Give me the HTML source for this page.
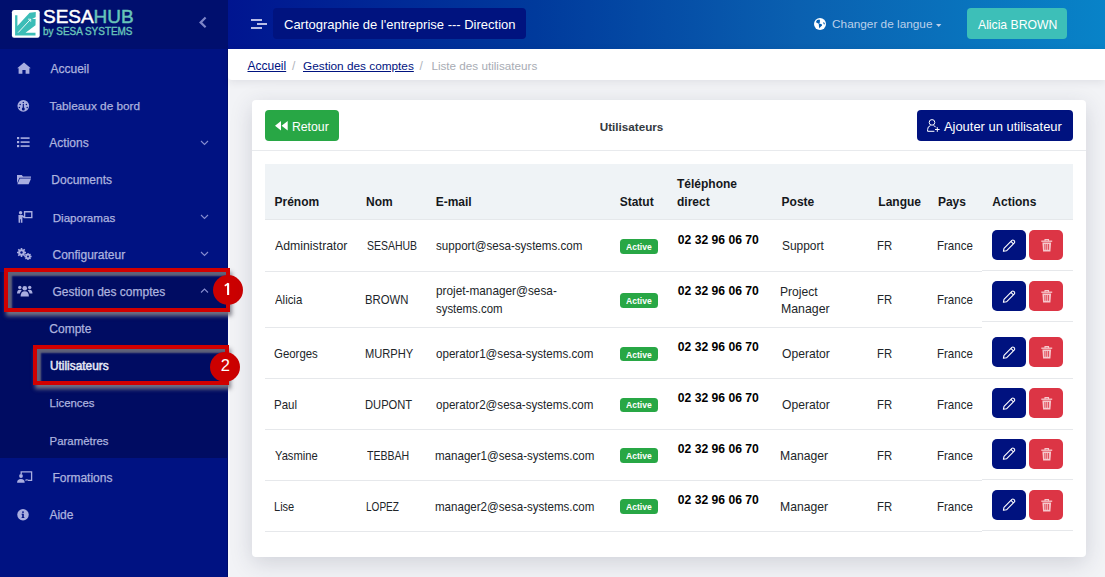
<!DOCTYPE html>
<html><head><meta charset="utf-8"><style>
html,body{margin:0;padding:0;width:1105px;height:577px;overflow:hidden;background:#eef0f4;}
body{position:relative;font-family:"Liberation Sans",sans-serif;}
.t{position:absolute;white-space:nowrap;font-family:"Liberation Sans",sans-serif;}
.r{position:absolute;box-sizing:content-box;}
svg.r{overflow:visible}
</style></head><body>
<div class="r" style="left:228px;top:48px;width:877px;height:529px;background:#f2f3f6;"></div>
<div class="r" style="left:228px;top:48px;width:1.5px;height:529px;background:#f8f9fb;"></div>
<div class="r" style="left:0px;top:0px;width:228px;height:577px;background:#001282;"></div>
<div class="r" style="left:0px;top:0px;width:228px;height:49px;background:#000f6e;"></div>
<div class="r" style="left:0px;top:272px;width:228px;height:186px;background:#000c62;"></div>
<div class="r" style="left:227px;top:49px;width:1px;height:528px;background:#000d6a;"></div>
<svg class="r" style="left:11px;top:10px" width="29" height="28" viewBox="0 0 28 28">
<rect x="0.4" y="0.1" width="27.8" height="27.7" rx="2.2" fill="#fff"/>
<path d="M3.6 5.3 L5.9 5.3 L5.9 15.9 L18.1 2.8 L24.3 1.9 L24.0 15.3 L14.0 22.8 L24.0 22.8 L24.0 25.6 L3.6 25.6 Z" fill="#3cbdb7"/>
<path d="M6.6 22.6 L19 9.4" stroke="#fff" stroke-width="0.9"/>
<path d="M16.5 9.2 L19.2 9.2 L19.2 11.8" stroke="#fff" stroke-width="0.8" fill="none"/>
<path d="M20.6 9 L24.4 6.9 L24.4 9 Z" fill="#fff"/>
</svg>
<div class="t" id="ts0" style="left:43.243px;top:5.62px;font-size:19px;line-height:22.8px;font-weight:400;color:#fff;transform:scaleX(0.99793);transform-origin:0 0;-webkit-text-stroke:0.5px #fff">SESA<span style="color:#68c4b9;-webkit-text-stroke:0.5px #68c4b9">HUB</span></div>
<div class="t" id="ts1" style="left:43.102px;top:25.93px;font-size:10px;line-height:12.0px;font-weight:400;color:#68c4b9;transform:scaleX(0.99391);transform-origin:0 0;-webkit-text-stroke:0.35px #68c4b9">by SESA SYSTEMS</div>
<svg class="r" style="left:197px;top:15px" width="12" height="15" viewBox="0 0 12 15"><path d="M8.6 2.5 L3.6 7.4 L8.6 12.3" stroke="#7d85c8" stroke-width="2.2" fill="none"/></svg>
<div class="t" style="left:50.5px;top:61.54px;font-size:12px;line-height:14.4px;font-weight:400;color:#adb3df;-webkit-text-stroke:0.25px #adb3df">Accueil</div>
<div class="t" style="left:49.6px;top:98.93px;font-size:11.8px;line-height:14.16px;font-weight:400;color:#adb3df;-webkit-text-stroke:0.25px #adb3df">Tableaux de bord</div>
<div class="t" style="left:49.3px;top:135.64px;font-size:12px;line-height:14.4px;font-weight:400;color:#adb3df;-webkit-text-stroke:0.25px #adb3df">Actions</div>
<div class="t" style="left:51.3px;top:172.84px;font-size:12px;line-height:14.4px;font-weight:400;color:#adb3df;-webkit-text-stroke:0.25px #adb3df">Documents</div>
<div class="t" style="left:52.7px;top:211.22px;font-size:11.6px;line-height:13.92px;font-weight:400;color:#adb3df;-webkit-text-stroke:0.25px #adb3df">Diaporamas</div>
<div class="t" style="left:52.5px;top:248.24px;font-size:12px;line-height:14.4px;font-weight:400;color:#adb3df;-webkit-text-stroke:0.25px #adb3df">Configurateur</div>
<div class="t" style="left:52.5px;top:284.64px;font-size:12px;line-height:14.4px;font-weight:400;color:#adb3df;-webkit-text-stroke:0.25px #adb3df">Gestion des comptes</div>
<div class="t" style="left:52.4px;top:470.94px;font-size:12px;line-height:14.4px;font-weight:400;color:#adb3df;-webkit-text-stroke:0.25px #adb3df">Formations</div>
<div class="t" style="left:49.4px;top:507.84px;font-size:12px;line-height:14.4px;font-weight:400;color:#adb3df;-webkit-text-stroke:0.25px #adb3df">Aide</div>
<div class="t" style="left:49.3px;top:321.74px;font-size:12px;line-height:14.4px;font-weight:400;color:#adb3df;-webkit-text-stroke:0.25px #adb3df">Compte</div>
<div class="t" style="left:49.6px;top:396.61px;font-size:11.4px;line-height:13.68px;font-weight:400;color:#adb3df;-webkit-text-stroke:0.25px #adb3df">Licences</div>
<div class="t" style="left:49.6px;top:434.61px;font-size:11.4px;line-height:13.68px;font-weight:400;color:#adb3df;-webkit-text-stroke:0.25px #adb3df">Paramètres</div>
<div class="t" id="ts2" style="left:49.755px;top:358.84px;font-size:12px;line-height:14.4px;font-weight:400;color:#e6e8f6;transform:scaleX(0.98762);transform-origin:0 0;-webkit-text-stroke:0.5px #e6e8f6">Utilisateurs</div>
<svg class="r" style="left:199.8px;top:140.4px" width="9" height="6" viewBox="0 0 9 6"><path d="M1 1 L4.5 4.5 L8 1" stroke="#858cd0" stroke-width="1.1" fill="none"/></svg>
<svg class="r" style="left:199.8px;top:213.9px" width="9" height="6" viewBox="0 0 9 6"><path d="M1 1 L4.5 4.5 L8 1" stroke="#858cd0" stroke-width="1.1" fill="none"/></svg>
<svg class="r" style="left:199.8px;top:250.9px" width="9" height="6" viewBox="0 0 9 6"><path d="M1 1 L4.5 4.5 L8 1" stroke="#858cd0" stroke-width="1.1" fill="none"/></svg>
<svg class="r" style="left:199.6px;top:287.8px" width="9" height="6" viewBox="0 0 9 6"><path d="M1 4.5 L4.5 1 L8 4.5" stroke="#858cd0" stroke-width="1.1" fill="none"/></svg>
<svg class="r" style="left:16.9px;top:62.4px" width="14" height="12" viewBox="0 0 14 12"><path d="M7 0.5 L13.8 6.3 L12.4 6.3 L12.4 11.7 L8.6 11.7 L8.6 8 L5.4 8 L5.4 11.7 L1.6 11.7 L1.6 6.3 L0.2 6.3 Z" fill="#a9aee0"/></svg>
<svg class="r" style="left:16.8px;top:99.7px" width="12.6" height="11.7" viewBox="0 0 12.6 11.7"><circle cx="6.3" cy="5.85" r="5.85" fill="#a9aee0"/><circle cx="3.2" cy="4.6" r="0.75" fill="#001282"/><circle cx="6.3" cy="2.4" r="0.75" fill="#001282"/><circle cx="9.4" cy="4.6" r="0.75" fill="#001282"/><circle cx="2.4" cy="7.6" r="0.75" fill="#001282"/><circle cx="10.2" cy="7.6" r="0.75" fill="#001282"/><path d="M6.3 4 L6.3 8" stroke="#001282" stroke-width="1.1"/><circle cx="6.3" cy="8.9" r="1.5" fill="#001282"/></svg>
<svg class="r" style="left:16.8px;top:137.3px" width="12.6" height="10.2" viewBox="0 0 12.6 10.2"><rect x="0" y="0" width="2.2" height="2.2" fill="#a9aee0"/><rect x="0" y="4" width="2.2" height="2.2" fill="#a9aee0"/><rect x="0" y="8" width="2.2" height="2.2" fill="#a9aee0"/><rect x="3.6" y="0.3" width="9" height="1.6" fill="#a9aee0"/><rect x="3.6" y="4.3" width="9" height="1.6" fill="#a9aee0"/><rect x="3.6" y="8.3" width="9" height="1.6" fill="#a9aee0"/></svg>
<svg class="r" style="left:16.8px;top:173.7px" width="14.1" height="10.2" viewBox="0 0 14.1 10.2"><path d="M0 1 L0 9.5 L2.4 3.8 L14 3.8 L14 2.6 L6 2.6 L4.8 1 Z" fill="#a9aee0"/><path d="M2.8 4.6 L14.1 4.6 L11.6 10.2 L0.4 10.2 Z" fill="#a9aee0"/></svg>
<svg class="r" style="left:17.8px;top:211.3px" width="14.5" height="11.7" viewBox="0 0 14.5 11.7"><circle cx="2.6" cy="1.7" r="1.7" fill="#a9aee0"/><path d="M0.4 4 L4.4 4 L6.6 5.8 L5.8 6.9 L4.4 6 L4.4 11.7 L2.9 11.7 L2.9 8.2 L2.1 8.2 L2.1 11.7 L0.6 11.7 Z" fill="#a9aee0"/><path d="M6.6 0.7 L13.8 0.7 L13.8 6.6 L6.6 6.6 Z" stroke="#a9aee0" stroke-width="1.4" fill="none"/></svg>
<svg class="r" style="left:16.8px;top:248.2px" width="15" height="12.1" viewBox="0 0 15 12.1"><circle cx="4.5" cy="4.5" r="3.3" fill="#a9aee0"/><circle cx="4.5" cy="4.5" r="1.2" fill="#001282"/><path d="M4.5 0 L4.5 9 M0 4.5 L9 4.5 M1.3 1.3 L7.7 7.7 M7.7 1.3 L1.3 7.7" stroke="#a9aee0" stroke-width="1.6"/><circle cx="4.5" cy="4.5" r="1.2" fill="#001282"/><circle cx="11" cy="8.5" r="2.7" fill="#a9aee0"/><path d="M11 4.9 L11 12.1 M7.4 8.5 L14.6 8.5 M8.5 6 L13.5 11 M13.5 6 L8.5 11" stroke="#a9aee0" stroke-width="1.4"/><circle cx="11" cy="8.5" r="1" fill="#001282"/></svg>
<svg class="r" style="left:16.8px;top:285.3px" width="15.5" height="11.4" viewBox="0 0 15.5 11.4"><circle cx="7.75" cy="3.2" r="2.3" fill="#a9aee0"/><circle cx="2.8" cy="2.4" r="1.7" fill="#a9aee0"/><circle cx="12.7" cy="2.4" r="1.7" fill="#a9aee0"/><path d="M3.6 11.4 Q3.6 6.2 7.75 6.2 Q11.9 6.2 11.9 11.4 Z" fill="#a9aee0"/><path d="M0 8.6 Q0 4.8 2.8 4.8 Q4.2 4.8 4.8 5.6 Q3 7 2.9 8.6 Z" fill="#a9aee0"/><path d="M15.5 8.6 Q15.5 4.8 12.7 4.8 Q11.3 4.8 10.7 5.6 Q12.5 7 12.6 8.6 Z" fill="#a9aee0"/></svg>
<svg class="r" style="left:16.9px;top:471.0px" width="15.3" height="12" viewBox="0 0 15.3 12"><path d="M4.2 3 L4.2 0.8 L14.6 0.8 L14.6 9.4 L11 9.4" stroke="#a9aee0" stroke-width="1.3" fill="none"/><circle cx="4" cy="5" r="1.9" fill="#a9aee0"/><path d="M0.1 11.7 Q0.1 8 3.9 8 Q7.7 8 7.7 11.7 Z" fill="#a9aee0"/><path d="M7.8 9.6 Q8.6 7.8 10.2 8.2 Q11.4 8.6 11.6 9.6 Z" fill="#a9aee0"/></svg>
<svg class="r" style="left:16.9px;top:508.6px" width="12" height="11.5" viewBox="0 0 12 11.5"><circle cx="6" cy="5.75" r="5.75" fill="#a9aee0"/><rect x="5.2" y="4.8" width="1.6" height="4" fill="#001282"/><circle cx="6" cy="3.1" r="0.95" fill="#001282"/><rect x="4.6" y="8" width="2.8" height="0.9" fill="#001282"/><rect x="4.6" y="4.8" width="1.5" height="0.9" fill="#001282"/></svg>
<div class="r" style="left:4px;top:268px;width:218px;height:36px;border:4px solid #d10000;box-shadow:inset 4px 4px 2px #5f6279, 2px 4px 4px rgba(125,125,135,0.9);"></div>
<div class="r" style="left:33px;top:345.2px;width:188px;height:31.6px;border:4px solid #d10000;box-shadow:inset 4px 4px 2px #5f6279, 2px 4px 4px rgba(125,125,135,0.9);"></div>
<div class="r" style="left:213px;top:274.5px;width:30px;height:30px;border-radius:50%;background:#cc0000;color:#fff;font-size:16.5px;line-height:27.8px;text-align:center;font-family:'Liberation Sans'"></div>
<svg class="r" style="left:224px;top:283px" width="6" height="12.2" viewBox="0 0 6 12.2"><path d="M4.1 0.2 L4.1 12" stroke="#fff" stroke-width="2.1" fill="none"/><path d="M0.7 2.8 Q3 1.9 4.1 0.3" stroke="#fff" stroke-width="1.6" fill="none"/></svg>
<div class="r" style="left:210.25px;top:351.5px;width:30px;height:30px;border-radius:50%;background:#cc0000;color:#fff;font-size:16.5px;line-height:27.8px;text-align:center;font-family:'Liberation Sans'">2</div>
<div class="r" style="left:228px;top:0px;width:877px;height:49px;background:linear-gradient(90deg,#001590 0%,#003a9c 35%,#0a60b0 65%,#0883c8 100%);"></div>
<div class="r" style="left:251px;top:19px;width:11px;height:2px;background:#b9bde6;"></div>
<div class="r" style="left:257.3px;top:22.8px;width:9.6px;height:2px;background:#b9bde6;"></div>
<div class="r" style="left:251px;top:26.9px;width:11px;height:2px;background:#b9bde6;"></div>
<div class="r" style="left:273.4px;top:8.1px;width:252.5px;height:30.5px;background:#00137f;border-radius:4px"></div>
<div class="t" style="left:284px;top:17.00px;font-size:13px;line-height:15.6px;font-weight:400;color:#ffffff;">Cartographie de l'entreprise --- Direction</div>
<svg class="r" style="left:813.9px;top:18px" width="12" height="12" viewBox="0 0 12 12"><circle cx="6" cy="6" r="6" fill="#fff"/>
<path d="M1.84 4.33 L3.05 2.08 L5.48 1.56 L6.17 2.95 L5.48 4.33 L6.5 5.2 L4.44 5.72 L3.05 4.68 Z" fill="#0560b4"/>
<path d="M4.78 6.07 L7.56 6.07 L8.08 7.45 L6.17 9.19 L5.48 10.57 L4.96 8.49 Z" fill="#0560b4"/>
<path d="M9.29 3.99 L10.68 5.03 L10.68 6.41 L9.8 6.24 L9.29 5.03 Z" fill="#0560b4"/></svg>
<div class="t" style="left:832.1px;top:17.43px;font-size:11.8px;line-height:14.16px;font-weight:400;color:#bcd0ea;">Changer de langue</div>
<svg class="r" style="left:935.5px;top:23.5px" width="5.4" height="3" viewBox="0 0 5.4 3"><path d="M0 0 L5.4 0 L2.7 3 Z" fill="#bcd0ea"/></svg>
<div class="r" style="left:967px;top:8px;width:100px;height:31px;background:#3dbfb8;border-radius:4px"></div>
<div class="t" style="left:978px;top:17.75px;font-size:12.2px;line-height:14.64px;font-weight:400;color:#ffffff;">Alicia BROWN</div>
<div class="r" style="left:228px;top:49px;width:877px;height:31px;background:#ffffff;border-radius:0 0 0 4px;box-shadow:0 2px 8px rgba(30,35,60,0.09)"></div>
<div class="t" style="left:247.5px;top:58.64px;font-size:12px;line-height:14.4px;font-weight:400;color:#00137f;text-decoration:underline">Accueil</div>
<div class="t" style="left:292px;top:58.64px;font-size:12px;line-height:14.4px;font-weight:400;color:#b0b4bc;">/</div>
<div class="t" style="left:303px;top:58.83px;font-size:11.8px;line-height:14.16px;font-weight:400;color:#00137f;text-decoration:underline">Gestion des comptes</div>
<div class="t" style="left:419.5px;top:58.64px;font-size:12px;line-height:14.4px;font-weight:400;color:#b0b4bc;">/</div>
<div class="t" style="left:431.4px;top:58.93px;font-size:11.7px;line-height:14.04px;font-weight:400;color:#a8acb4;">Liste des utilisateurs</div>
<div class="r" style="left:252px;top:100px;width:834px;height:457px;background:#ffffff;border-radius:4px;box-shadow:0 6px 22px rgba(40,45,75,0.17)"></div>
<div class="r" style="left:252px;top:150.3px;width:834px;height:1px;background:#e8eaed;"></div>
<div class="r" style="left:265px;top:110px;width:74px;height:30.8px;background:#28a745;border-radius:4px"></div>
<svg class="r" style="left:275px;top:120.8px" width="13" height="9.4" viewBox="0 0 13 9.4"><path d="M0 4.7 L6 0 L6 9.4 Z M6.6 4.7 L12.7 0 L12.7 9.4 Z" fill="#fff"/></svg>
<div class="t" style="left:291.9px;top:119.96px;font-size:12.3px;line-height:14.76px;font-weight:400;color:#ffffff;">Retour</div>
<div class="t" style="left:599.7px;top:119.73px;font-size:11.7px;line-height:14.04px;font-weight:700;color:#343a40;">Utilisateurs</div>
<div class="r" style="left:917px;top:110px;width:156px;height:31px;background:#00127f;border-radius:4px"></div>
<svg class="r" style="left:926.5px;top:119.2px" width="13" height="13" viewBox="0 0 13 13">
<circle cx="5" cy="3.4" r="2.8" stroke="#fff" stroke-width="1" fill="none"/>
<path d="M0.6 12.3 L0.6 10.6 Q0.6 7.3 3.5 6.6 M6.5 6.6 Q8 7 8.8 8.3" stroke="#fff" stroke-width="1" fill="none"/>
<path d="M0.6 12.3 L7.4 12.3" stroke="#fff" stroke-width="1"/>
<path d="M10.3 8.2 L10.3 12.8 M8 10.5 L12.6 10.5" stroke="#fff" stroke-width="1"/></svg>
<div class="t" style="left:943.9px;top:118.74px;font-size:12.95px;line-height:15.54px;font-weight:400;color:#ffffff;">Ajouter un utilisateur</div>
<div class="r" style="left:265px;top:164px;width:808px;height:55.5px;background:#eff3f6;"></div>
<div class="r" style="left:265px;top:219px;width:808px;height:1px;background:#e5e8eb;"></div>
<div class="t" style="left:274.5px;top:194.64px;font-size:12px;line-height:14.4px;font-weight:700;color:#15181c;">Prénom</div>
<div class="t" style="left:366.1px;top:194.64px;font-size:12px;line-height:14.4px;font-weight:700;color:#15181c;">Nom</div>
<div class="t" style="left:435.7px;top:194.64px;font-size:12px;line-height:14.4px;font-weight:700;color:#15181c;">E-mail</div>
<div class="t" style="left:619.7px;top:194.64px;font-size:12px;line-height:14.4px;font-weight:700;color:#15181c;">Statut</div>
<div class="t" style="left:781.6px;top:194.64px;font-size:12px;line-height:14.4px;font-weight:700;color:#15181c;">Poste</div>
<div class="t" style="left:878.3px;top:194.64px;font-size:12px;line-height:14.4px;font-weight:700;color:#15181c;">Langue</div>
<div class="t" style="left:937.9px;top:194.64px;font-size:12px;line-height:14.4px;font-weight:700;color:#15181c;">Pays</div>
<div class="t" style="left:992.3px;top:194.64px;font-size:12px;line-height:14.4px;font-weight:700;color:#15181c;">Actions</div>
<div class="t" style="left:677px;top:176.64px;font-size:12px;line-height:14.4px;font-weight:700;color:#15181c;">Téléphone</div>
<div class="t" style="left:677px;top:194.64px;font-size:12px;line-height:14.4px;font-weight:700;color:#15181c;">direct</div>
<div class="r" style="left:265px;top:270.5px;width:717px;height:1px;background:#e6e8eb;"></div>
<div class="r" style="left:982px;top:269.8px;width:91px;height:1px;background:#e6e8eb;"></div>
<div class="t" id="ts3" style="left:274.804px;top:238.37px;font-size:13.5px;line-height:16.2px;font-weight:400;color:#212529;transform:scaleX(0.91108);transform-origin:0 0;">Administrator</div>
<div class="t" id="ts4" style="left:366.507px;top:238.37px;font-size:13.5px;line-height:16.2px;font-weight:400;color:#212529;transform:scaleX(0.77637);transform-origin:0 0;">SESAHUB</div>
<div class="t" id="ts5" style="left:435.881px;top:238.37px;font-size:13.5px;line-height:16.2px;font-weight:400;color:#212529;transform:scaleX(0.85844);transform-origin:0 0;">support@sesa-systems.com</div>
<div class="t" id="ts6" style="left:781.752px;top:238.37px;font-size:13.5px;line-height:16.2px;font-weight:400;color:#212529;transform:scaleX(0.88378);transform-origin:0 0;">Support</div>
<div class="t" id="ts7" style="left:876.757px;top:238.37px;font-size:13.5px;line-height:16.2px;font-weight:400;color:#212529;transform:scaleX(0.83750);transform-origin:0 0;">FR</div>
<div class="t" id="ts8" style="left:937.148px;top:238.37px;font-size:13.5px;line-height:16.2px;font-weight:400;color:#212529;transform:scaleX(0.85203);transform-origin:0 0;">France</div>
<div class="r" style="left:619.8px;top:239.05px;width:38px;height:14.7px;background:#28a745;border-radius:3.5px"></div>
<div class="t" id="ts9" style="left:625.557px;top:240.96px;font-size:9.5px;line-height:11.4px;font-weight:700;color:#ffffff;transform:scaleX(0.90142);transform-origin:0 0;">Active</div>
<div class="t" style="left:677.8px;top:233.10px;font-size:12.15px;line-height:14.58px;font-weight:700;color:#000000;">02 32 96 06 70</div>
<div class="r" style="left:992px;top:230.2px;width:34px;height:30px;background:#00127f;border-radius:5px"></div>
<svg class="r" style="left:1002px;top:238.7px" width="14" height="14" viewBox="0 0 14 14"><path d="M1.4 12.3 L2 9.3 L9.9 1.4 Q10.8 0.6 11.8 1.4 L12.4 2 Q13.2 3 12.4 3.9 L4.5 11.8 Z M8.9 2.4 L11.4 4.9" stroke="#fff" stroke-width="1.1" fill="none" stroke-linejoin="round"/></svg>
<div class="r" style="left:1029.1px;top:230.2px;width:34px;height:30px;background:#dc3545;border-radius:5px"></div>
<svg class="r" style="left:1040.5px;top:239.2px" width="11.5" height="13" viewBox="0 0 11.5 13">
<path d="M0.3 2.2 L11.2 2.2" stroke="#f6c9cd" stroke-width="1.3"/><path d="M4 2 L4 0.6 L7.5 0.6 L7.5 2" stroke="#f6c9cd" stroke-width="1.1" fill="none"/>
<path d="M1.4 3.4 L10.1 3.4 L9.4 12.5 L2.1 12.5 Z" fill="#f6c9cd"/>
<path d="M3.9 5 L3.9 10.8 M5.75 5 L5.75 10.8 M7.6 5 L7.6 10.8" stroke="#dc3545" stroke-width="0.9"/></svg>
<div class="r" style="left:265px;top:327.0px;width:717px;height:1px;background:#e6e8eb;"></div>
<div class="r" style="left:982px;top:321.3px;width:91px;height:1px;background:#e6e8eb;"></div>
<div class="t" id="ts10" style="left:274.812px;top:292.37px;font-size:13.5px;line-height:16.2px;font-weight:400;color:#212529;transform:scaleX(0.84372);transform-origin:0 0;">Alicia</div>
<div class="t" id="ts11" style="left:365.062px;top:292.37px;font-size:13.5px;line-height:16.2px;font-weight:400;color:#212529;transform:scaleX(0.83820);transform-origin:0 0;">BROWN</div>
<div class="t" id="ts12" style="left:435.737px;top:283.12px;font-size:13.5px;line-height:16.2px;font-weight:400;color:#212529;transform:scaleX(0.87380);transform-origin:0 0;">projet-manager@sesa-</div>
<div class="t" id="ts13" style="left:436.193px;top:301.12px;font-size:13.5px;line-height:16.2px;font-weight:400;color:#212529;transform:scaleX(0.84383);transform-origin:0 0;">systems.com</div>
<div class="t" id="ts14" style="left:779.689px;top:283.62px;font-size:13.5px;line-height:16.2px;font-weight:400;color:#212529;transform:scaleX(0.89775);transform-origin:0 0;">Project</div>
<div class="t" id="ts15" style="left:780.685px;top:300.72px;font-size:13.5px;line-height:16.2px;font-weight:400;color:#212529;transform:scaleX(0.91293);transform-origin:0 0;">Manager</div>
<div class="t" id="ts16" style="left:876.757px;top:292.37px;font-size:13.5px;line-height:16.2px;font-weight:400;color:#212529;transform:scaleX(0.83750);transform-origin:0 0;">FR</div>
<div class="t" id="ts17" style="left:937.148px;top:292.37px;font-size:13.5px;line-height:16.2px;font-weight:400;color:#212529;transform:scaleX(0.85203);transform-origin:0 0;">France</div>
<div class="r" style="left:619.8px;top:293.05px;width:38px;height:14.7px;background:#28a745;border-radius:3.5px"></div>
<div class="t" id="ts18" style="left:625.557px;top:294.96px;font-size:9.5px;line-height:11.4px;font-weight:700;color:#ffffff;transform:scaleX(0.90142);transform-origin:0 0;">Active</div>
<div class="t" style="left:677.8px;top:283.60px;font-size:12.15px;line-height:14.58px;font-weight:700;color:#000000;">02 32 96 06 70</div>
<div class="r" style="left:992px;top:281px;width:34px;height:30px;background:#00127f;border-radius:5px"></div>
<svg class="r" style="left:1002px;top:289.5px" width="14" height="14" viewBox="0 0 14 14"><path d="M1.4 12.3 L2 9.3 L9.9 1.4 Q10.8 0.6 11.8 1.4 L12.4 2 Q13.2 3 12.4 3.9 L4.5 11.8 Z M8.9 2.4 L11.4 4.9" stroke="#fff" stroke-width="1.1" fill="none" stroke-linejoin="round"/></svg>
<div class="r" style="left:1029.1px;top:281px;width:34px;height:30px;background:#dc3545;border-radius:5px"></div>
<svg class="r" style="left:1040.5px;top:290px" width="11.5" height="13" viewBox="0 0 11.5 13">
<path d="M0.3 2.2 L11.2 2.2" stroke="#f6c9cd" stroke-width="1.3"/><path d="M4 2 L4 0.6 L7.5 0.6 L7.5 2" stroke="#f6c9cd" stroke-width="1.1" fill="none"/>
<path d="M1.4 3.4 L10.1 3.4 L9.4 12.5 L2.1 12.5 Z" fill="#f6c9cd"/>
<path d="M3.9 5 L3.9 10.8 M5.75 5 L5.75 10.8 M7.6 5 L7.6 10.8" stroke="#dc3545" stroke-width="0.9"/></svg>
<div class="r" style="left:265px;top:378.0px;width:717px;height:1px;background:#e6e8eb;"></div>
<div class="r" style="left:982px;top:377.8px;width:91px;height:1px;background:#e6e8eb;"></div>
<div class="t" id="ts19" style="left:274.368px;top:346.12px;font-size:13.5px;line-height:16.2px;font-weight:400;color:#212529;transform:scaleX(0.84549);transform-origin:0 0;">Georges</div>
<div class="t" id="ts20" style="left:365.083px;top:346.12px;font-size:13.5px;line-height:16.2px;font-weight:400;color:#212529;transform:scaleX(0.82456);transform-origin:0 0;">MURPHY</div>
<div class="t" id="ts21" style="left:435.667px;top:346.12px;font-size:13.5px;line-height:16.2px;font-weight:400;color:#212529;transform:scaleX(0.85829);transform-origin:0 0;">operator1@sesa-systems.com</div>
<div class="t" id="ts22" style="left:781.752px;top:346.12px;font-size:13.5px;line-height:16.2px;font-weight:400;color:#212529;transform:scaleX(0.89764);transform-origin:0 0;">Operator</div>
<div class="t" id="ts23" style="left:876.757px;top:346.12px;font-size:13.5px;line-height:16.2px;font-weight:400;color:#212529;transform:scaleX(0.83750);transform-origin:0 0;">FR</div>
<div class="t" id="ts24" style="left:937.148px;top:346.12px;font-size:13.5px;line-height:16.2px;font-weight:400;color:#212529;transform:scaleX(0.85203);transform-origin:0 0;">France</div>
<div class="r" style="left:619.8px;top:346.8px;width:38px;height:14.7px;background:#28a745;border-radius:3.5px"></div>
<div class="t" id="ts25" style="left:625.557px;top:348.71px;font-size:9.5px;line-height:11.4px;font-weight:700;color:#ffffff;transform:scaleX(0.90142);transform-origin:0 0;">Active</div>
<div class="t" style="left:677.8px;top:340.10px;font-size:12.15px;line-height:14.58px;font-weight:700;color:#000000;">02 32 96 06 70</div>
<div class="r" style="left:992px;top:337.2px;width:34px;height:30px;background:#00127f;border-radius:5px"></div>
<svg class="r" style="left:1002px;top:345.7px" width="14" height="14" viewBox="0 0 14 14"><path d="M1.4 12.3 L2 9.3 L9.9 1.4 Q10.8 0.6 11.8 1.4 L12.4 2 Q13.2 3 12.4 3.9 L4.5 11.8 Z M8.9 2.4 L11.4 4.9" stroke="#fff" stroke-width="1.1" fill="none" stroke-linejoin="round"/></svg>
<div class="r" style="left:1029.1px;top:337.2px;width:34px;height:30px;background:#dc3545;border-radius:5px"></div>
<svg class="r" style="left:1040.5px;top:346.2px" width="11.5" height="13" viewBox="0 0 11.5 13">
<path d="M0.3 2.2 L11.2 2.2" stroke="#f6c9cd" stroke-width="1.3"/><path d="M4 2 L4 0.6 L7.5 0.6 L7.5 2" stroke="#f6c9cd" stroke-width="1.1" fill="none"/>
<path d="M1.4 3.4 L10.1 3.4 L9.4 12.5 L2.1 12.5 Z" fill="#f6c9cd"/>
<path d="M3.9 5 L3.9 10.8 M5.75 5 L5.75 10.8 M7.6 5 L7.6 10.8" stroke="#dc3545" stroke-width="0.9"/></svg>
<div class="r" style="left:265px;top:428.5px;width:717px;height:1px;background:#e6e8eb;"></div>
<div class="r" style="left:982px;top:428.8px;width:91px;height:1px;background:#e6e8eb;"></div>
<div class="t" id="ts26" style="left:273.962px;top:396.87px;font-size:13.5px;line-height:16.2px;font-weight:400;color:#212529;transform:scaleX(0.85195);transform-origin:0 0;">Paul</div>
<div class="t" id="ts27" style="left:365.073px;top:396.87px;font-size:13.5px;line-height:16.2px;font-weight:400;color:#212529;transform:scaleX(0.82701);transform-origin:0 0;">DUPONT</div>
<div class="t" id="ts28" style="left:435.667px;top:396.87px;font-size:13.5px;line-height:16.2px;font-weight:400;color:#212529;transform:scaleX(0.85829);transform-origin:0 0;">operator2@sesa-systems.com</div>
<div class="t" id="ts29" style="left:781.752px;top:396.87px;font-size:13.5px;line-height:16.2px;font-weight:400;color:#212529;transform:scaleX(0.89764);transform-origin:0 0;">Operator</div>
<div class="t" id="ts30" style="left:876.757px;top:396.87px;font-size:13.5px;line-height:16.2px;font-weight:400;color:#212529;transform:scaleX(0.83750);transform-origin:0 0;">FR</div>
<div class="t" id="ts31" style="left:937.148px;top:396.87px;font-size:13.5px;line-height:16.2px;font-weight:400;color:#212529;transform:scaleX(0.85203);transform-origin:0 0;">France</div>
<div class="r" style="left:619.8px;top:397.55px;width:38px;height:14.7px;background:#28a745;border-radius:3.5px"></div>
<div class="t" id="ts32" style="left:625.557px;top:399.46px;font-size:9.5px;line-height:11.4px;font-weight:700;color:#ffffff;transform:scaleX(0.90142);transform-origin:0 0;">Active</div>
<div class="t" style="left:677.8px;top:391.10px;font-size:12.15px;line-height:14.58px;font-weight:700;color:#000000;">02 32 96 06 70</div>
<div class="r" style="left:992px;top:388.2px;width:34px;height:30px;background:#00127f;border-radius:5px"></div>
<svg class="r" style="left:1002px;top:396.7px" width="14" height="14" viewBox="0 0 14 14"><path d="M1.4 12.3 L2 9.3 L9.9 1.4 Q10.8 0.6 11.8 1.4 L12.4 2 Q13.2 3 12.4 3.9 L4.5 11.8 Z M8.9 2.4 L11.4 4.9" stroke="#fff" stroke-width="1.1" fill="none" stroke-linejoin="round"/></svg>
<div class="r" style="left:1029.1px;top:388.2px;width:34px;height:30px;background:#dc3545;border-radius:5px"></div>
<svg class="r" style="left:1040.5px;top:397.2px" width="11.5" height="13" viewBox="0 0 11.5 13">
<path d="M0.3 2.2 L11.2 2.2" stroke="#f6c9cd" stroke-width="1.3"/><path d="M4 2 L4 0.6 L7.5 0.6 L7.5 2" stroke="#f6c9cd" stroke-width="1.1" fill="none"/>
<path d="M1.4 3.4 L10.1 3.4 L9.4 12.5 L2.1 12.5 Z" fill="#f6c9cd"/>
<path d="M3.9 5 L3.9 10.8 M5.75 5 L5.75 10.8 M7.6 5 L7.6 10.8" stroke="#dc3545" stroke-width="0.9"/></svg>
<div class="r" style="left:265px;top:479.5px;width:717px;height:1px;background:#e6e8eb;"></div>
<div class="r" style="left:982px;top:479.3px;width:91px;height:1px;background:#e6e8eb;"></div>
<div class="t" id="ts33" style="left:274.587px;top:447.62px;font-size:13.5px;line-height:16.2px;font-weight:400;color:#212529;transform:scaleX(0.82968);transform-origin:0 0;">Yasmine</div>
<div class="t" id="ts34" style="left:366.707px;top:447.62px;font-size:13.5px;line-height:16.2px;font-weight:400;color:#212529;transform:scaleX(0.78117);transform-origin:0 0;">TEBBAH</div>
<div class="t" id="ts35" style="left:435.455px;top:447.62px;font-size:13.5px;line-height:16.2px;font-weight:400;color:#212529;transform:scaleX(0.85579);transform-origin:0 0;">manager1@sesa-systems.com</div>
<div class="t" id="ts36" style="left:780.297px;top:447.62px;font-size:13.5px;line-height:16.2px;font-weight:400;color:#212529;transform:scaleX(0.90154);transform-origin:0 0;">Manager</div>
<div class="t" id="ts37" style="left:876.757px;top:447.62px;font-size:13.5px;line-height:16.2px;font-weight:400;color:#212529;transform:scaleX(0.83750);transform-origin:0 0;">FR</div>
<div class="t" id="ts38" style="left:937.148px;top:447.62px;font-size:13.5px;line-height:16.2px;font-weight:400;color:#212529;transform:scaleX(0.85203);transform-origin:0 0;">France</div>
<div class="r" style="left:619.8px;top:448.3px;width:38px;height:14.7px;background:#28a745;border-radius:3.5px"></div>
<div class="t" id="ts39" style="left:625.557px;top:450.21px;font-size:9.5px;line-height:11.4px;font-weight:700;color:#ffffff;transform:scaleX(0.90142);transform-origin:0 0;">Active</div>
<div class="t" style="left:677.8px;top:441.60px;font-size:12.15px;line-height:14.58px;font-weight:700;color:#000000;">02 32 96 06 70</div>
<div class="r" style="left:992px;top:438.7px;width:34px;height:30px;background:#00127f;border-radius:5px"></div>
<svg class="r" style="left:1002px;top:447.2px" width="14" height="14" viewBox="0 0 14 14"><path d="M1.4 12.3 L2 9.3 L9.9 1.4 Q10.8 0.6 11.8 1.4 L12.4 2 Q13.2 3 12.4 3.9 L4.5 11.8 Z M8.9 2.4 L11.4 4.9" stroke="#fff" stroke-width="1.1" fill="none" stroke-linejoin="round"/></svg>
<div class="r" style="left:1029.1px;top:438.7px;width:34px;height:30px;background:#dc3545;border-radius:5px"></div>
<svg class="r" style="left:1040.5px;top:447.7px" width="11.5" height="13" viewBox="0 0 11.5 13">
<path d="M0.3 2.2 L11.2 2.2" stroke="#f6c9cd" stroke-width="1.3"/><path d="M4 2 L4 0.6 L7.5 0.6 L7.5 2" stroke="#f6c9cd" stroke-width="1.1" fill="none"/>
<path d="M1.4 3.4 L10.1 3.4 L9.4 12.5 L2.1 12.5 Z" fill="#f6c9cd"/>
<path d="M3.9 5 L3.9 10.8 M5.75 5 L5.75 10.8 M7.6 5 L7.6 10.8" stroke="#dc3545" stroke-width="0.9"/></svg>
<div class="r" style="left:265px;top:530.5px;width:717px;height:1px;background:#e6e8eb;"></div>
<div class="r" style="left:982px;top:530.3px;width:91px;height:1px;background:#e6e8eb;"></div>
<div class="t" id="ts40" style="left:273.983px;top:498.62px;font-size:13.5px;line-height:16.2px;font-weight:400;color:#212529;transform:scaleX(0.81720);transform-origin:0 0;">Lise</div>
<div class="t" id="ts41" style="left:366.139px;top:498.62px;font-size:13.5px;line-height:16.2px;font-weight:400;color:#212529;transform:scaleX(0.74286);transform-origin:0 0;">LOPEZ</div>
<div class="t" id="ts42" style="left:435.455px;top:498.62px;font-size:13.5px;line-height:16.2px;font-weight:400;color:#212529;transform:scaleX(0.85579);transform-origin:0 0;">manager2@sesa-systems.com</div>
<div class="t" id="ts43" style="left:780.297px;top:498.62px;font-size:13.5px;line-height:16.2px;font-weight:400;color:#212529;transform:scaleX(0.90154);transform-origin:0 0;">Manager</div>
<div class="t" id="ts44" style="left:876.757px;top:498.62px;font-size:13.5px;line-height:16.2px;font-weight:400;color:#212529;transform:scaleX(0.83750);transform-origin:0 0;">FR</div>
<div class="t" id="ts45" style="left:937.148px;top:498.62px;font-size:13.5px;line-height:16.2px;font-weight:400;color:#212529;transform:scaleX(0.85203);transform-origin:0 0;">France</div>
<div class="r" style="left:619.8px;top:499.3px;width:38px;height:14.7px;background:#28a745;border-radius:3.5px"></div>
<div class="t" id="ts46" style="left:625.557px;top:501.21px;font-size:9.5px;line-height:11.4px;font-weight:700;color:#ffffff;transform:scaleX(0.90142);transform-origin:0 0;">Active</div>
<div class="t" style="left:677.8px;top:492.60px;font-size:12.15px;line-height:14.58px;font-weight:700;color:#000000;">02 32 96 06 70</div>
<div class="r" style="left:992px;top:489.7px;width:34px;height:30px;background:#00127f;border-radius:5px"></div>
<svg class="r" style="left:1002px;top:498.2px" width="14" height="14" viewBox="0 0 14 14"><path d="M1.4 12.3 L2 9.3 L9.9 1.4 Q10.8 0.6 11.8 1.4 L12.4 2 Q13.2 3 12.4 3.9 L4.5 11.8 Z M8.9 2.4 L11.4 4.9" stroke="#fff" stroke-width="1.1" fill="none" stroke-linejoin="round"/></svg>
<div class="r" style="left:1029.1px;top:489.7px;width:34px;height:30px;background:#dc3545;border-radius:5px"></div>
<svg class="r" style="left:1040.5px;top:498.7px" width="11.5" height="13" viewBox="0 0 11.5 13">
<path d="M0.3 2.2 L11.2 2.2" stroke="#f6c9cd" stroke-width="1.3"/><path d="M4 2 L4 0.6 L7.5 0.6 L7.5 2" stroke="#f6c9cd" stroke-width="1.1" fill="none"/>
<path d="M1.4 3.4 L10.1 3.4 L9.4 12.5 L2.1 12.5 Z" fill="#f6c9cd"/>
<path d="M3.9 5 L3.9 10.8 M5.75 5 L5.75 10.8 M7.6 5 L7.6 10.8" stroke="#dc3545" stroke-width="0.9"/></svg>
</body></html>
